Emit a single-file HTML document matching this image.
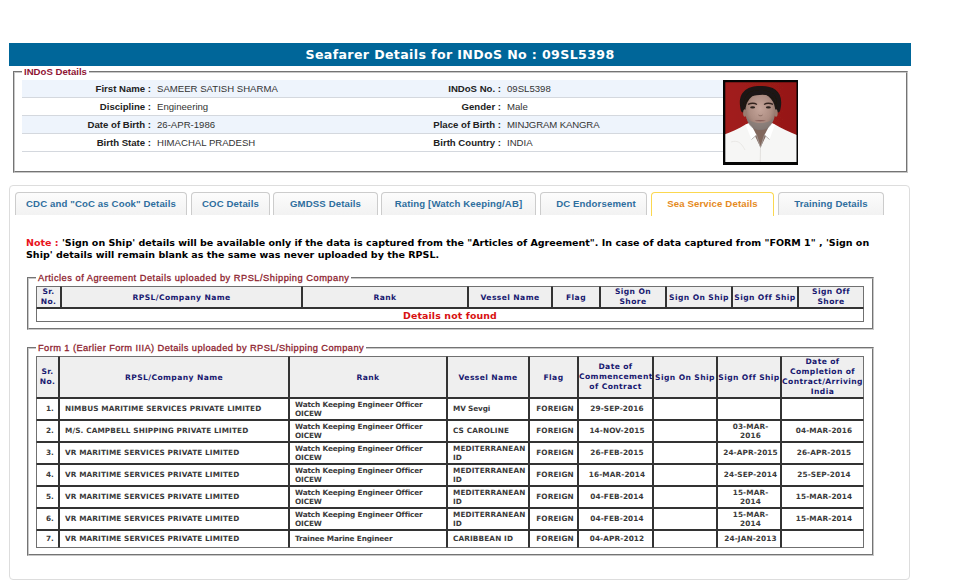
<!DOCTYPE html>
<html lang="en">
<head>
<meta charset="utf-8">
<title>Seafarer Details</title>
<style>
html,body{margin:0;padding:0;background:#fff;}
body{width:978px;height:586px;position:relative;overflow:hidden;font-family:"Liberation Sans",Arial,sans-serif;font-size:9.6px;letter-spacing:0;color:#333;}
.abs{position:absolute;}
.vb{font-family:"DejaVu Sans",Verdana,sans-serif;font-weight:bold;}
#title{left:9px;top:43px;width:902px;height:23px;background:#006699;color:#fff;text-align:center;font-size:12.6px;line-height:23px;overflow:hidden;letter-spacing:0.36px;}
fieldset{margin:0;padding:0;border:2px groove #c8c8c8;box-sizing:border-box;min-width:0;}
legend{padding:0 2px;margin-left:7px;color:#8f1433;font-weight:bold;font-size:9.6px;line-height:12px;font-family:"Liberation Sans",Arial,sans-serif;}
#fs1{left:13px;top:66px;width:895px;height:107px;}
.row{position:absolute;left:22px;width:701px;height:17px;border-bottom:1px solid #d4d8de;line-height:17px;font-size:9.6px;}
.row.alt{background:#eef4fc;}
.lbl{position:absolute;top:0;text-align:right;font-weight:bold;color:#222;white-space:nowrap;}
.val{position:absolute;top:0;color:#333;white-space:nowrap;}
#photo{left:723px;top:80px;width:75px;height:85px;background:#000;}
#tabs{left:9px;top:185px;width:901px;height:395px;border:1px solid #ddd;border-radius:4px;box-sizing:border-box;}
.tab{position:absolute;top:192px;height:23px;box-sizing:border-box;border:1px solid #ccc;border-bottom:none;border-radius:4px 4px 0 0;background:linear-gradient(#fcfcfc 0%,#f7f7f7 50%,#f2f2f2 100%);color:#2e6e9e;font-weight:bold;font-size:9.6px;line-height:22px;text-align:center;white-space:nowrap;letter-spacing:0.13px;}
.tab.act{border-color:#fbd850;background:#fff;color:#e58a1c;height:24px;}
#note{left:26px;top:237px;width:860px;font-size:9.53px;line-height:12px;color:#000;letter-spacing:0;white-space:nowrap;}
#note b{color:#e8141c;}
table{border-collapse:separate;border-spacing:0;table-layout:fixed;position:absolute;}
td,th{border:1px solid #333;padding:0;font-family:"DejaVu Sans",Verdana,sans-serif;font-weight:bold;font-size:7.3px;line-height:9px;color:#3a3a3a;overflow:hidden;box-sizing:border-box;letter-spacing:0.13px;white-space:nowrap;}
th{background:#efefef;color:#191970;font-size:7.6px;letter-spacing:0.4px;line-height:10px;text-align:center;}
legend.lr{font-weight:normal;font-size:9.3px;letter-spacing:0.49px;color:#8e1f30;-webkit-text-stroke:0.3px #8e1f30;}
tr>*:first-child{border-left-color:#707070;}
tr>*:last-child{border-right-color:#707070;}
tr:first-child>*{border-top-color:#707070;}
tr:last-child>*{border-bottom-color:#707070;}
td.r{letter-spacing:-0.13px;}
td.s{padding-bottom:1px;}
th.h1{padding-top:2px;}
td.n{text-align:right;padding-right:4px;}
td.c{text-align:center;padding-left:3px;}
td.l{text-align:left;padding-left:5px;}
</style>
</head>
<body>
<div id="title" class="abs vb">Seafarer Details for INDoS No : 09SL5398</div>

<fieldset id="fs1" class="abs"><legend>INDoS Details</legend></fieldset>
<div class="row alt" style="top:80px"><span class="lbl" style="right:572px">First Name :</span><span class="val" style="left:135px">SAMEER SATISH SHARMA</span><span class="lbl" style="right:222px">INDoS No. :</span><span class="val" style="left:485px">09SL5398</span></div>
<div class="row" style="top:98px"><span class="lbl" style="right:572px">Discipline :</span><span class="val" style="left:135px">Engineering</span><span class="lbl" style="right:222px">Gender :</span><span class="val" style="left:485px">Male</span></div>
<div class="row alt" style="top:116px"><span class="lbl" style="right:572px">Date of Birth :</span><span class="val" style="left:135px">26-APR-1986</span><span class="lbl" style="right:222px">Place of Birth :</span><span class="val" style="left:485px;letter-spacing:-0.13px">MINJGRAM KANGRA</span></div>
<div class="row" style="top:134px"><span class="lbl" style="right:572px">Birth State :</span><span class="val" style="left:135px">HIMACHAL PRADESH</span><span class="lbl" style="right:222px">Birth Country :</span><span class="val" style="left:485px">INDIA</span></div>

<div id="photo" class="abs">
<svg width="75" height="85" viewBox="0 0 75 85">
<defs>
<filter id="pb" x="-10%" y="-10%" width="120%" height="120%"><feGaussianBlur stdDeviation="0.6"/></filter>
<clipPath id="pc"><rect x="2.3" y="2.3" width="71.2" height="79.7"/></clipPath>
<radialGradient id="fg" cx="0.5" cy="0.42" r="0.62"><stop offset="0" stop-color="#c6a69b"/><stop offset="0.6" stop-color="#ad8d82"/><stop offset="1" stop-color="#856a60"/></radialGradient>
<linearGradient id="rg" x1="0" y1="0" x2="1" y2="0"><stop offset="0" stop-color="#a21d1b"/><stop offset="1" stop-color="#951817"/></linearGradient>
</defs>
<rect x="0" y="0" width="75" height="85" fill="#050505"/>
<g clip-path="url(#pc)"><g filter="url(#pb)">
<rect x="0" y="0" width="75" height="85" fill="url(#rg)"/>
<path d="M0 55 C8 52 16 49 22.5 44.5 L30 46 L37.5 64 L45 46 L52 44.5 C58 48 66 52 75 55.5 L75 85 L0 85 Z" fill="#f6f6f5"/>
<path d="M28 38 L27.5 46 L32 56 L37.5 67.5 L43 56 L47.5 46 L47 38 Z" fill="#82675d"/>
<path d="M29 44 L37.5 50 L46 44 L46 40 L29 40 Z" fill="#6b5249"/>
<path d="M22.5 44.5 L28.5 59.5 L33.5 55 L27 42.5 Z" fill="#ffffff"/>
<path d="M52 44.5 L46.5 59.5 L41.5 55 L48 42.5 Z" fill="#ffffff"/>
<path d="M28.5 59.5 L33.5 55 L37.5 67.5 L41.5 55 L46.5 59.5" fill="none" stroke="#aaa5a1" stroke-width="0.8"/>
<path d="M37.5 68 L37.2 84" fill="none" stroke="#dad7d4" stroke-width="0.7"/>
<path d="M8 62 C14 60 18 62 22 70" fill="none" stroke="#e6e4e2" stroke-width="0.8"/>
<path d="M18 31 C13 12 25 5.5 37.5 6 C51 5.5 62 12 57 31 C56 33 54 33 53 30 L22.5 30 C21.5 33 19 33 18 31 Z" fill="#1b1412"/>
<ellipse cx="37.3" cy="31.5" rx="15" ry="18.2" fill="url(#fg)"/>
<ellipse cx="21.8" cy="33" rx="1.7" ry="3.8" fill="#9a7b6f"/>
<ellipse cx="53" cy="33" rx="1.7" ry="3.8" fill="#9a7b6f"/>
<path d="M23.5 37 C25 47 31 50.2 37.3 50.2 C43.5 50.2 49.5 47 51 37 C48 41.5 43 43 37.3 43 C31.5 43 26.5 41.5 23.5 37 Z" fill="#7f7c7b" opacity="0.65"/>
<path d="M31.5 40.6 C34 39.7 40.5 39.7 43 40.6 C40.5 41.8 34 41.8 31.5 40.6 Z" fill="#8a5f5a"/>
<path d="M21.3 28 C19.5 18 24 12 30 11 C36 10 46 10 49 13 C53.5 16 54.5 22 53.8 28 C52.5 21 50.5 17.5 46 15.5 C40 14 33 15 28 16.5 C24.5 18.5 22.5 22 21.3 28 Z" fill="#1b1412"/>
<path d="M25 24.4 C28 23 32 23.2 34 24.5" fill="none" stroke="#33241f" stroke-width="1.3"/>
<path d="M41 24.5 C43 23.2 47 23 50 24.4" fill="none" stroke="#33241f" stroke-width="1.3"/>
<ellipse cx="29.6" cy="27.4" rx="2.5" ry="1.1" fill="#2b201d"/>
<ellipse cx="45.4" cy="27.4" rx="2.5" ry="1.1" fill="#2b201d"/>
<path d="M35.5 35 C36.5 36 38.5 36 39.5 35" fill="none" stroke="#7d5f55" stroke-width="0.9"/>
</g></g>
</svg>
</div>

<div id="tabs" class="abs"></div>
<div class="tab" style="left:15px;width:172px">CDC and "CoC as Cook" Details</div>
<div class="tab" style="left:191px;width:79px">COC Details</div>
<div class="tab" style="left:273px;width:105px">GMDSS Details</div>
<div class="tab" style="left:381px;width:155px">Rating [Watch Keeping/AB]</div>
<div class="tab" style="left:540px;width:107px;padding-left:5px">DC Endorsement</div>
<div class="tab act" style="left:651px;width:123px">Sea Service Details</div>
<div class="tab" style="left:778px;width:106px">Training Details</div>

<div id="note" class="abs vb"><b>Note :</b> 'Sign on Ship' details will be available only if the data is captured from the "Articles of Agreement". In case of data captured from "FORM 1" , 'Sign on<br>Ship' details will remain blank as the same was never uploaded by the RPSL.</div>

<fieldset class="abs" style="left:27px;top:272px;width:847px;height:58px"><legend class="lr">Articles of Agreement Details uploaded by RPSL/Shipping Company</legend></fieldset>
<table style="left:36px;top:286px;width:828px">
<colgroup><col style="width:25px"><col style="width:241px"><col style="width:166px"><col style="width:84px"><col style="width:48px"><col style="width:66px"><col style="width:66px"><col style="width:66px"><col style="width:66px"></colgroup>
<tr style="height:22px"><th>Sr.<br>No.</th><th class="h1">RPSL/Company Name</th><th class="h1">Rank</th><th class="h1">Vessel Name</th><th class="h1">Flag</th><th>Sign On<br>Shore</th><th class="h1">Sign On Ship</th><th class="h1">Sign Off Ship</th><th>Sign Off<br>Shore</th></tr>
<tr style="height:14px"><td colspan="9" class="c" style="color:#d81010;font-size:9.4px;line-height:10px;padding:2px 0 0 0">Details not found</td></tr>
</table>

<fieldset class="abs" style="left:27px;top:342px;width:847px;height:214px"><legend class="lr" style="letter-spacing:0.41px">Form 1 (Earlier Form IIIA) Details uploaded by RPSL/Shipping Company</legend></fieldset>
<table style="left:36px;top:356px;width:828px">
<colgroup><col style="width:23px"><col style="width:230px"><col style="width:158px"><col style="width:82px"><col style="width:49px"><col style="width:75px"><col style="width:64px"><col style="width:64px"><col style="width:83px"></colgroup>
<tr style="height:42px"><th>Sr.<br>No.</th><th class="h1">RPSL/Company Name</th><th class="h1">Rank</th><th class="h1">Vessel Name</th><th class="h1">Flag</th><th>Date of<br>Commencement<br>of Contract</th><th class="h1">Sign On Ship</th><th class="h1">Sign Off Ship</th><th>Date of<br>Completion of<br>Contract/Arriving<br>India</th></tr>
<tr style="height:22px"><td class="n s">1.</td><td class="l s">NIMBUS MARITIME SERVICES PRIVATE LIMITED</td><td class="l r">Watch Keeping Engineer Officer<br>OICEW</td><td class="l r s">MV Sevgi</td><td class="c s">FOREIGN</td><td class="c s">29-SEP-2016</td><td></td><td></td><td></td></tr>
<tr style="height:22px"><td class="n s">2.</td><td class="l s">M/S. CAMPBELL SHIPPING PRIVATE LIMITED</td><td class="l r">Watch Keeping Engineer Officer<br>OICEW</td><td class="l s">CS CAROLINE</td><td class="c s">FOREIGN</td><td class="c s">14-NOV-2015</td><td></td><td class="c">03-MAR-<br>2016</td><td class="c s">04-MAR-2016</td></tr>
<tr style="height:22px"><td class="n s">3.</td><td class="l s">VR MARITIME SERVICES PRIVATE LIMITED</td><td class="l r">Watch Keeping Engineer Officer<br>OICEW</td><td class="l">MEDITERRANEAN<br>ID</td><td class="c s">FOREIGN</td><td class="c s">26-FEB-2015</td><td></td><td class="c s">24-APR-2015</td><td class="c s">26-APR-2015</td></tr>
<tr style="height:22px"><td class="n s">4.</td><td class="l s">VR MARITIME SERVICES PRIVATE LIMITED</td><td class="l r">Watch Keeping Engineer Officer<br>OICEW</td><td class="l">MEDITERRANEAN<br>ID</td><td class="c s">FOREIGN</td><td class="c s">16-MAR-2014</td><td></td><td class="c s">24-SEP-2014</td><td class="c s">25-SEP-2014</td></tr>
<tr style="height:22px"><td class="n s">5.</td><td class="l s">VR MARITIME SERVICES PRIVATE LIMITED</td><td class="l r">Watch Keeping Engineer Officer<br>OICEW</td><td class="l">MEDITERRANEAN<br>ID</td><td class="c s">FOREIGN</td><td class="c s">04-FEB-2014</td><td></td><td class="c">15-MAR-<br>2014</td><td class="c s">15-MAR-2014</td></tr>
<tr style="height:22px"><td class="n s">6.</td><td class="l s">VR MARITIME SERVICES PRIVATE LIMITED</td><td class="l r">Watch Keeping Engineer Officer<br>OICEW</td><td class="l">MEDITERRANEAN<br>ID</td><td class="c s">FOREIGN</td><td class="c s">04-FEB-2014</td><td></td><td class="c">15-MAR-<br>2014</td><td class="c s">15-MAR-2014</td></tr>
<tr style="height:18px"><td class="n s">7.</td><td class="l s">VR MARITIME SERVICES PRIVATE LIMITED</td><td class="l r s">Trainee Marine Engineer</td><td class="l s">CARIBBEAN ID</td><td class="c s">FOREIGN</td><td class="c s">04-APR-2012</td><td></td><td class="c s">24-JAN-2013</td><td></td></tr>
</table>
</body>
</html>
